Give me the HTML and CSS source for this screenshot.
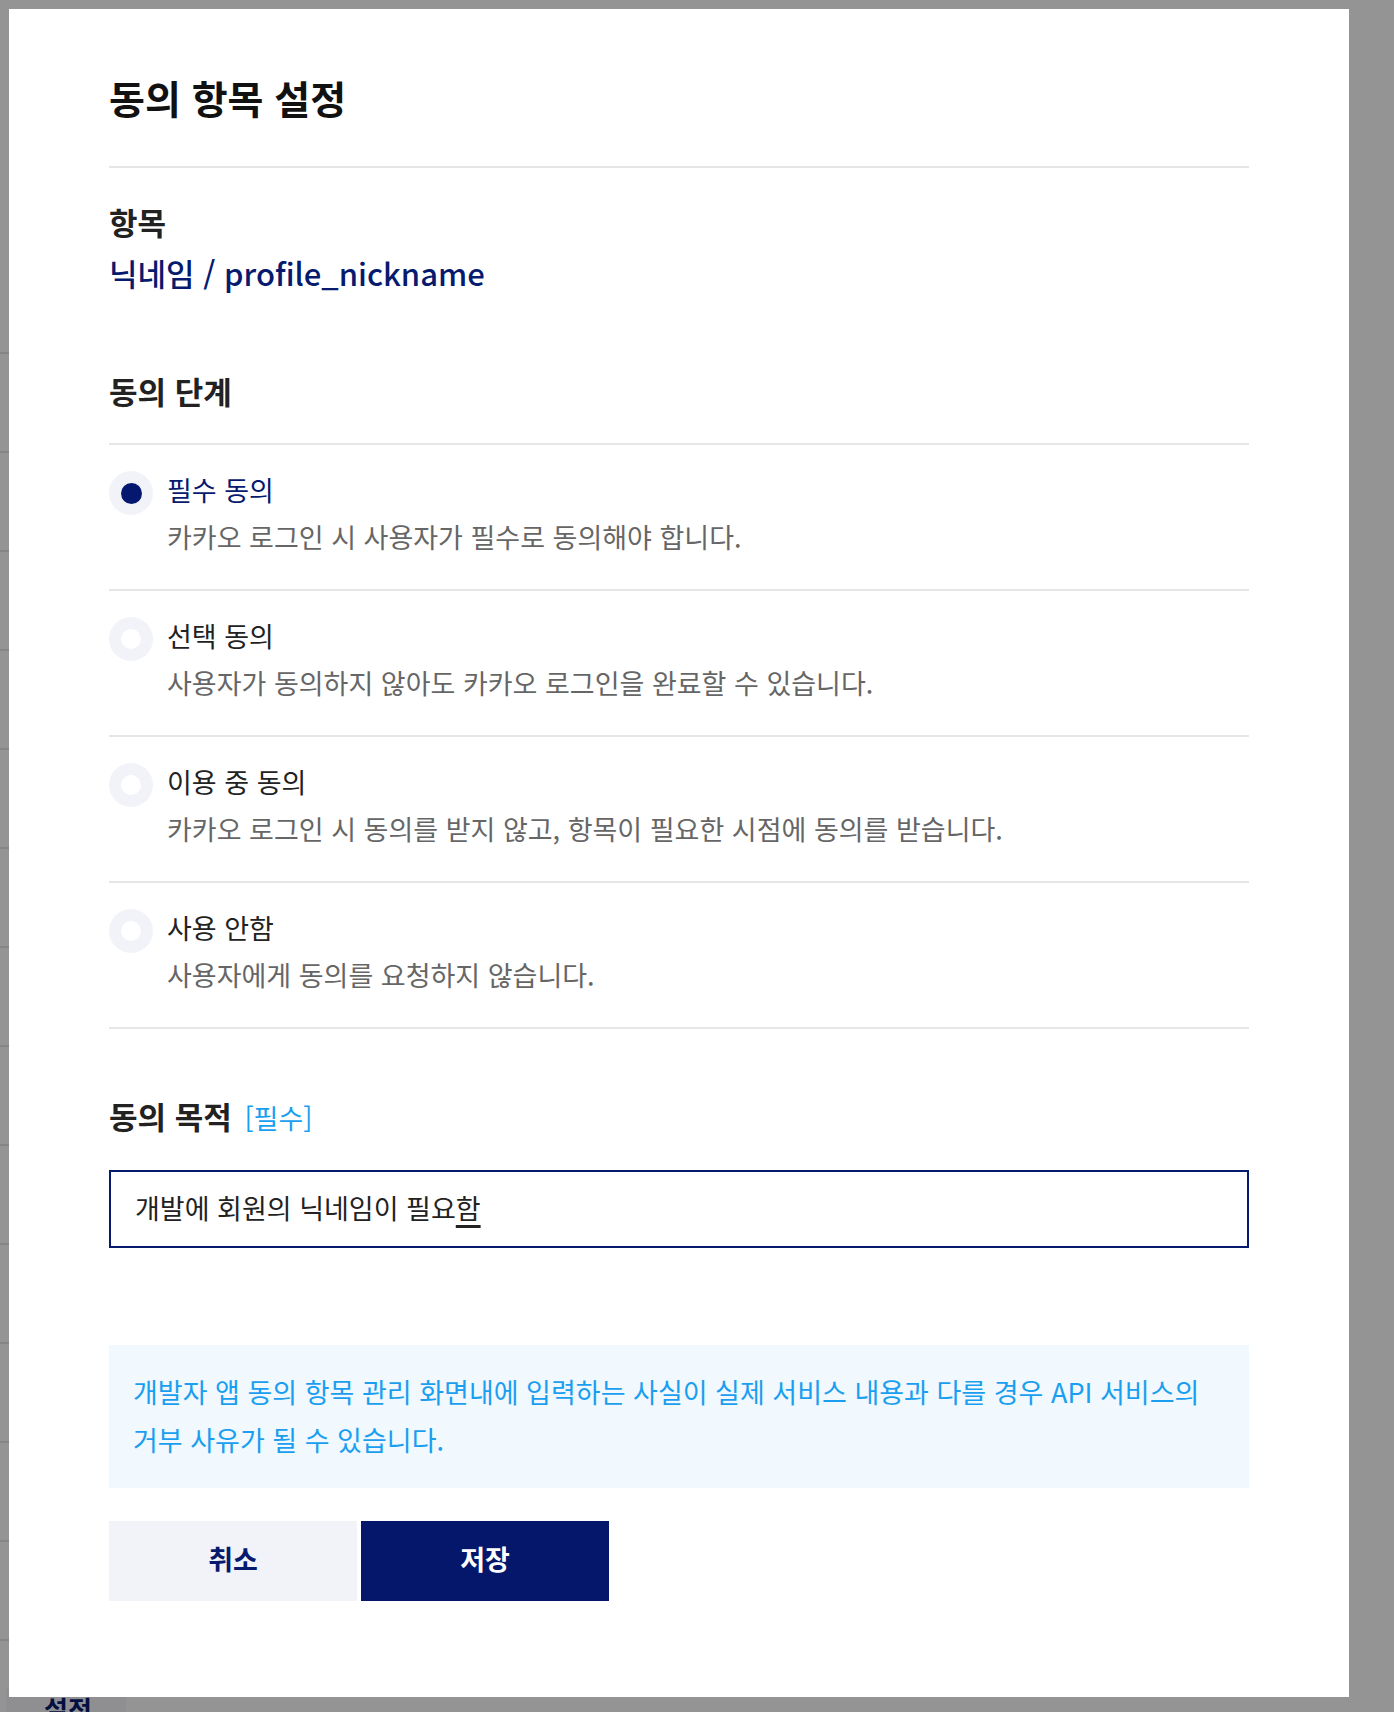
FILE: index.html
```html
<!DOCTYPE html>
<html lang="ko">
<head>
    <meta charset="UTF-8">
    <meta name="viewport" content="width=device-width, initial-scale=1.0">
    <title>동의 항목 설정</title>
    <link rel="stylesheet" href="styles.css">
</head>
<body>

    <!-- page behind the dialog -->
    <div class="page">
        <ul class="page-rows">
            <li></li><li></li><li></li><li></li><li></li>
            <li></li><li></li><li></li><li></li><li></li>
            <li></li><li></li><li></li><li></li>
        </ul>
        <div class="page-tab">설정</div>
    </div>
    <div class="dim"></div>

    <div class="modal">
        <h1 class="modal-title">동의 항목 설정</h1>

        <div class="field">
            <h2 class="field-label">항목</h2>
            <p class="item-name">닉네임 / profile_nickname</p>
        </div>

        <div class="field">
            <h2 class="field-label">동의 단계</h2>
            <ul class="option-list">
                <li class="option selected">
                    <span class="radio"></span>
                    <div class="option-text">
                        <div class="option-title">필수 동의</div>
                        <div class="option-desc">카카오 로그인 시 사용자가 필수로 동의해야 합니다.</div>
                    </div>
                </li>
                <li class="option">
                    <span class="radio"></span>
                    <div class="option-text">
                        <div class="option-title">선택 동의</div>
                        <div class="option-desc">사용자가 동의하지 않아도 카카오 로그인을 완료할 수 있습니다.</div>
                    </div>
                </li>
                <li class="option">
                    <span class="radio"></span>
                    <div class="option-text">
                        <div class="option-title">이용 중 동의</div>
                        <div class="option-desc">카카오 로그인 시 동의를 받지 않고, 항목이 필요한 시점에 동의를 받습니다.</div>
                    </div>
                </li>
                <li class="option">
                    <span class="radio"></span>
                    <div class="option-text">
                        <div class="option-title">사용 안함</div>
                        <div class="option-desc">사용자에게 동의를 요청하지 않습니다.</div>
                    </div>
                </li>
            </ul>
        </div>

        <div class="field purpose">
            <h2 class="field-label">동의 목적 <span class="required">[필수]</span></h2>
            <div class="text-input">개발에 회원의 닉네임이 필요<span class="composing">함</span></div>
        </div>

        <div class="notice">
            개발자 앱 동의 항목 관리 화면내에 입력하는 사실이 실제 서비스 내용과 다를 경우 API 서비스의<br>
            거부 사유가 될 수 있습니다.
        </div>

        <div class="actions">
            <button type="button" class="btn btn-cancel">취소</button>
            <button type="button" class="btn btn-save">저장</button>
        </div>
    </div>

</body>
</html>
```

FILE: styles.css
```css
* {
    box-sizing: border-box;
}
body {
    margin: 0;
    height: 1712px;
    overflow: hidden;
    position: relative;
    background: #fff;
    font-family: "Noto Sans CJK KR", "Noto Sans", sans-serif;
    color: #222;
}
h1, h2, p, ul {
    margin: 0;
    padding: 0;
}
ul {
    list-style: none;
}

/* background page */
.page {
    height: 100%;
    padding-top: 255px;
}
.page-rows {
    width: 600px;
}
.page-rows li {
    height: 99px;
    border-bottom: 2px solid #e6e6e6;
}
.page-tab {
    position: absolute;
    left: 6px;
    bottom: 0;
    width: 120px;
    height: 23px;
    background: #f6f6fc;
    color: #061a6e;
    font-size: 26px;
    font-weight: 700;
    padding-left: 38px;
    line-height: 40px;
    overflow: hidden;
}
.dim {
    position: absolute;
    inset: 0;
    background: rgba(0, 0, 0, 0.42);
}

/* dialog */
.modal {
    position: absolute;
    top: 9px;
    left: 9px;
    width: 1340px;
    height: 1688px;
    background: #fff;
    padding: 64px 100px 0;
}
.modal-title {
    font-size: 39px;
    font-weight: 700;
    line-height: 48px;
    color: #111;
    padding-bottom: 45px;
    border-bottom: 2px solid #e6e6e6;
}
.field {
    margin-top: 34px;
}
.field-label {
    font-size: 31px;
    font-weight: 700;
    line-height: 40px;
    color: #222;
}
.item-name {
    margin-top: 9px;
    font-size: 31px;
    font-weight: 500;
    line-height: 44px;
    color: #061a6e;
}
.field + .field {
    margin-top: 76px;
}
.option-list {
    margin-top: 32px;
    border-bottom: 2px solid #e6e6e6;
}
.option {
    display: flex;
    gap: 14px;
    border-top: 2px solid #e6e6e6;
    padding: 27px 0 34px;
}
.radio {
    flex: none;
    width: 44px;
    height: 44px;
    margin-top: -1px;
    border-radius: 50%;
    background: #f1f3f9;
    display: flex;
    align-items: center;
    justify-content: center;
}
.radio::after {
    content: "";
    width: 20px;
    height: 20px;
    border-radius: 50%;
    background: #fff;
}
.option.selected .radio::after {
    width: 21px;
    height: 21px;
    background: #051870;
}
.option-title {
    font-size: 27px;
    line-height: 36px;
    color: #222;
}
.option.selected .option-title {
    color: #061a6e;
}
.option-desc {
    margin-top: 11px;
    font-size: 27px;
    line-height: 36px;
    color: #666;
}
.field.purpose {
    margin-top: 67px;
}
.required {
    margin-left: 4px;
    font-size: 27px;
    font-weight: 400;
    color: #1a9ff0;
}
.text-input {
    margin-top: 32px;
    height: 78px;
    border: 2px solid #061a6e;
    padding: 0 24px;
    font-size: 27px;
    line-height: 72px;
    color: #222;
}
.composing {
    text-decoration: underline;
    text-decoration-thickness: 3px;
    text-underline-offset: 6px;
}
.notice {
    margin-top: 97px;
    background: #f1f8fe;
    padding: 23px 24px 24px;
    font-size: 27px;
    line-height: 48px;
    color: #1a9ff0;
}
.actions {
    display: flex;
    gap: 4px;
    margin-top: 33px;
}
.btn {
    width: 248px;
    height: 80px;
    border: none;
    padding: 0 0 5px;
    font-family: inherit;
    font-size: 27px;
    font-weight: 700;
    cursor: pointer;
}
.btn-cancel {
    background: #f1f3f8;
    color: #061a6e;
}
.btn-save {
    background: #05176a;
    color: #fff;
}
```
